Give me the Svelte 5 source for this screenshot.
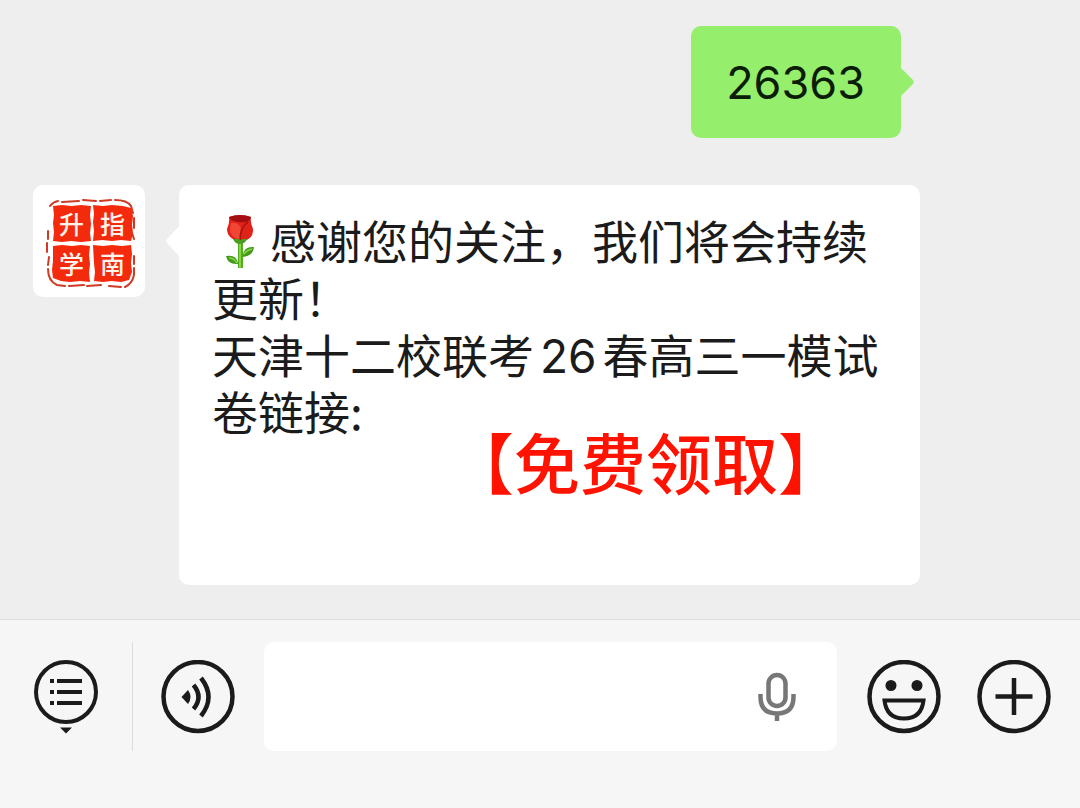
<script>
  let draft = $state('')

  const sent = '26363'
  const seal = ['升', '指', '学', '南']
</script>

<div class="page">
  <main class="chat">
    <div class="row sent">
      <div class="bubble green">
        {sent}
        <svg class="tail right" width="15" height="32" viewBox="0 0 15 32" aria-hidden="true">
          <path d="M0 0V1L12.5 13.5Q15 16 12.5 18.500L0 31Z" fill="#95ee6c" />
        </svg>
      </div>
    </div>

    <div class="row">
      <div class="avatar">
        <svg class="frame" viewBox="0 0 112 112" aria-hidden="true">
          <g fill="#f42a0c">
            <path d="M20 21l9-1 10 1 9-1 10 1-1 9 1 9-1 9 1 8-10 1-10-1-9 1-9-1 1-9-1-9 1-8z" />
            <path d="M60 20l10 1 9-1 11 1 8 2 2 8-1 9 1 8-2 8-10-1-9 1-10-1-9 1 1-10-1-9 1-8z" />
            <path d="M20 61l9-1 10 1 9-1 9 1-1 9 1 9-1 9 1 9-10-1-10 1-9-1-8-3-1-8 1-9z" />
            <path d="M60 60l10 1 9-1 10 1 9-1 1 9-1 9 1 9-3 8-8 2-9-1-9 1-9-1 1-9-1-9z" />
          </g>
          <g fill="none" stroke="#cf3a25" stroke-width="2" stroke-linecap="round">
            <path d="M17 21q3-4 8-5M29 17l17-1M50 15l13 1M67 16l11-1M82 15q12 0 16 6l2 7" />
            <path d="M101 33v10M99 48l2 6M101 71v8M101 83v7q-2 9-9 12" />
            <path d="M15 46v8M14 58v9M16 72l-1 8M15 84q0 12 9 16l8 1M36 101l15-1M54 101l14-1M76 101l12 1" />
          </g>
        </svg>
        <div class="seal">
          {#each seal as char}
            <span>{char}</span>
          {/each}
        </div>
      </div>

      <div class="bubble white">
        <svg class="tail left" width="15" height="32" viewBox="0 0 15 32" aria-hidden="true">
          <path d="M15 0V32L2.500 18.500Q0 16 2.500 13.500Z" fill="#fff" />
        </svg>
        <p>
          <svg class="rose" viewBox="0 0 28 54" role="img" aria-label="玫瑰">
            <path d="M12 25h5v28h-5z" fill="#4fae20" />
            <path d="M13 25h2v28h-2z" fill="#8bd447" />
            <path d="M17 40q1-9 11-8-1 9-11 10z" fill="#429b1a" />
            <path d="M18 39q3-4 8-5" stroke="#91cf4d" stroke-width="1.500" fill="none" />
            <path d="M12 49Q2 50 0 41q10-2 12 7z" fill="#429b1a" />
            <path d="M3 43q5 0 8 5" stroke="#91cf4d" stroke-width="1.500" fill="none" />
            <path d="M3 2Q14-2 25 2q-1 5 2 12 1 10-12 13Q1 24 1 14 4 7 3 2z" fill="#df2318" />
            <path d="M3 2Q14-2 25 2q-1 4-5 5-7 1-12-1-4-1-5-4z" fill="#a40d11" />
            <path d="M5 8q7-1 10 5-2 6-1 12Q4 22 4 14z" fill="#f24634" />
            <path d="M22 7q-8 5-8 19" stroke="#a9120f" stroke-width="1.500" fill="none" />
            <path d="M7 24q4-1 8 1 3-2 6-1-2 5-7 5t-7-5z" fill="#4a9d1d" />
          </svg>感谢您的关注，我们将会持续更新！
        </p>
        <p>天津十二校联考<span class="num">26</span>春高三一模试卷链接:</p>
        <a class="claim" href="#claim">【免费领取】</a>
      </div>
    </div>
  </main>

  <footer class="toolbar">
    <button class="menu" aria-label="菜单">
      <svg width="64" height="76" viewBox="0 0 64 76">
        <circle cx="32" cy="33" r="30" fill="none" stroke="#1b1b1b" stroke-width="4" />
        <path d="M16 22h4M23 22h25M16 33h4M23 33h25M16 44h4M23 44h25" stroke="#1b1b1b" stroke-width="4" />
        <path d="M26 68.500h12l-6 6z" fill="#1b1b1b" />
      </svg>
    </button>
    <button class="voice" aria-label="语音">
      <svg width="74" height="74" viewBox="0 0 74 74">
        <circle cx="37" cy="36.500" r="34.500" fill="none" stroke="#1b1b1b" stroke-width="4.500" />
        <path d="M20.500 37l6.500-7q5 7 0 14z" fill="#1b1b1b" />
        <path d="M32.500 25q10 12 0 24M40 18q15 19 0 38" fill="none" stroke="#1b1b1b" stroke-width="4.500" />
      </svg>
    </button>
    <div class="field">
      <input type="text" bind:value={draft} aria-label="输入消息" />
      <button class="mic" aria-label="语音输入">
        <svg width="38" height="50" viewBox="0 0 38 50">
          <g fill="none" stroke="#777" stroke-width="4.500">
            <rect x="10.500" y="3" width="17" height="31" rx="8.500" />
            <path d="M2.500 22v3q0 16.500 16.500 16.500t16.500-16.500v-3M19 41v8" />
          </g>
        </svg>
      </button>
    </div>
    <button class="smile" aria-label="表情">
      <svg width="74" height="74" viewBox="0 0 74 74">
        <circle cx="37" cy="36.500" r="34.500" fill="none" stroke="#1b1b1b" stroke-width="4.500" />
        <circle cx="24" cy="25.500" r="5.500" fill="#1b1b1b" />
        <circle cx="50" cy="25.500" r="5.500" fill="#1b1b1b" />
        <path d="M17.500 40.500h39q-2 18-19.500 18t-19.500-18z" fill="none" stroke="#1b1b1b" stroke-width="4" />
      </svg>
    </button>
    <button class="more" aria-label="更多">
      <svg width="74" height="74" viewBox="0 0 74 74">
        <circle cx="37" cy="36.500" r="34.500" fill="none" stroke="#1b1b1b" stroke-width="4.500" />
        <path d="M18.500 36.500h37M37 18v37" stroke="#1b1b1b" stroke-width="4.500" />
      </svg>
    </button>
  </footer>
</div>

<style>
  :global(body) {
    margin: 0;
  }

  .page {
    display: flex;
    flex-direction: column;
    min-height: 100vh;
    background: #eee;
    color: #1b1b1b;
    font-family: 'Noto Sans CJK SC', sans-serif;
    font-size: 46px;
    line-height: 57px;
  }

  .chat {
    display: flex;
    flex: 1;
    flex-direction: column;
    gap: 47px;
    padding: 26px 160px 33px 33px;
  }

  .row {
    display: flex;
    align-items: flex-start;
    gap: 34px;
  }

  .sent {
    justify-content: flex-end;
    padding-right: 19px;
  }

  .bubble {
    position: relative;
    box-sizing: border-box;
    border-radius: 10px;
  }

  .green {
    padding: 28px 36px 27px 35px;
    background: #95ee6c;
    color: #0b1d05;
    font-family: Inter, sans-serif;
    font-size: 45px;
  }

  .white {
    flex: 1;
    padding: 26px 32px 103px 33px;
    background: #fff;
  }

  .tail {
    position: absolute;
    top: 40px;
  }

  .right {
    right: -14px;
  }

  .left {
    left: -14px;
  }

  .avatar {
    position: relative;
    width: 112px;
    height: 112px;
    border-radius: 10px;
    background: #fff;
  }

  .frame {
    display: block;
  }

  /* characters printed over the red stamp blocks */
  .seal {
    position: absolute;
    inset: 18px 12px 14px 18px;
    display: grid;
    grid-template-columns: 1fr 1fr;
    place-items: center;
    color: #fff4ec;
    font-size: 25px;
    font-weight: 500;
    line-height: 40px;
  }

  p {
    margin: 0;
  }

  .rose {
    width: 28px;
    height: 54px;
    margin: -10px 16px -10px 14px;
    vertical-align: 0;
  }

  .num {
    margin: 0 6px;
    font-family: Inter, sans-serif;
    line-height: 1;
  }

  .claim {
    display: block;
    margin-left: 236px;
    color: #ff1200;
    font-size: 66px;
    font-weight: 500;
    line-height: 43px;
    text-decoration: none;
    white-space: nowrap;
  }

  .toolbar {
    display: flex;
    align-items: center;
    padding: 22px 29px 57px 0;
    border-top: 1px solid #dcdcdc;
    background: #f6f6f6;
  }

  button {
    padding: 0;
    border: 0;
    background: none;
    cursor: pointer;
  }

  button svg {
    display: block;
  }

  .menu {
    align-self: stretch;
    padding: 0 34px;
    border-right: 1px solid #dcdcdc;
  }

  .voice {
    margin: 0 29px 0 28px;
  }

  .field {
    display: flex;
    flex: 1;
    align-items: center;
    min-width: 0;
    height: 109px;
    padding-right: 41px;
    box-sizing: border-box;
    border-radius: 10px;
    background: #fff;
  }

  .field input {
    flex: 1;
    min-width: 0;
    height: 100%;
    padding: 0 24px;
    border: 0;
    outline: none;
    background: none;
    color: inherit;
    font: inherit;
  }

  .smile {
    margin: 0 36px 0 30px;
  }
</style>
